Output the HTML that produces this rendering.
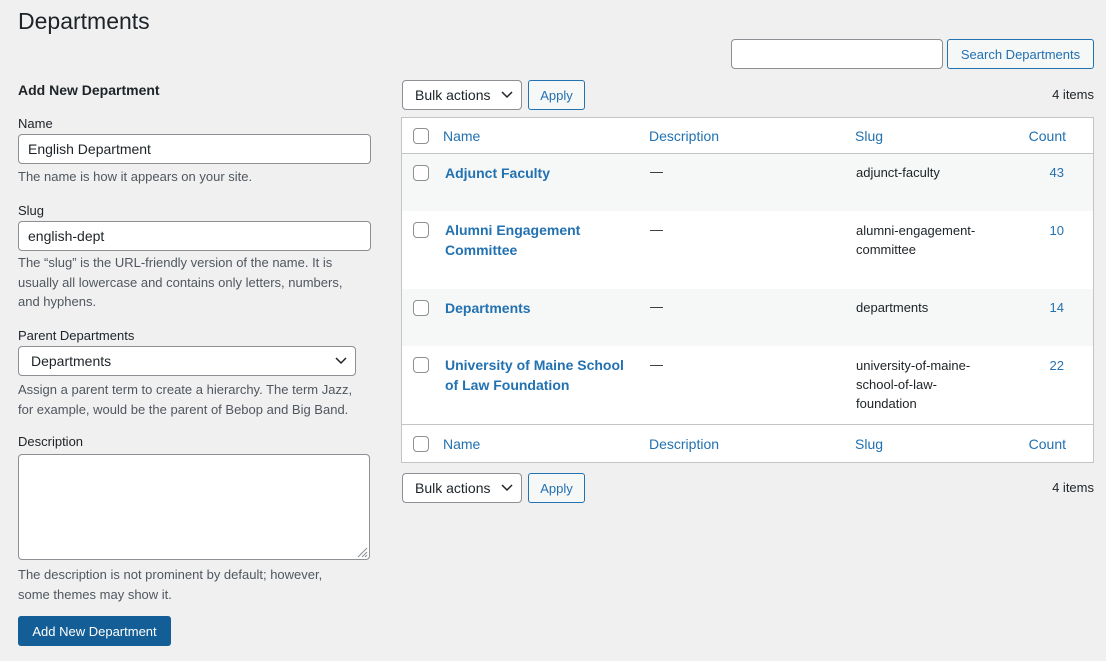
<!DOCTYPE html>
<html><head><style>
*{box-sizing:border-box;margin:0;padding:0}
body{width:1106px;height:661px;background:#f0f0f1;font-family:"Liberation Sans",sans-serif;font-size:13px;color:#1d2327;position:relative;overflow:hidden}
.a{position:absolute}
h1{position:absolute;left:18px;top:8px;font-size:23px;font-weight:400}
.inp{position:absolute;background:#fff;border:1px solid #8c8f94;border-radius:4px;font-size:14px;padding:0 9px;display:flex;align-items:center}
.btn{position:absolute;border:1px solid #2271b1;color:#2271b1;background:#f6f7f7;border-radius:3px;font-size:13px;display:flex;align-items:center;justify-content:center}
.sel{position:absolute;background:#fff;border:1px solid #8c8f94;border-radius:4px;font-size:14px;padding-left:12px;display:flex;align-items:center}
.sel svg{position:absolute;right:8px;top:50%;margin-top:-4px}
.help{position:absolute;left:18px;color:#50575e;font-size:13px;line-height:19.5px}
.lbl{position:absolute;left:18px;font-size:13px}
.cb{position:absolute;width:16px;height:16px;border:1px solid #8c8f94;border-radius:4px;background:#fff;left:413px}
.nm{position:absolute;left:445px;font-weight:700;color:#2271b1;font-size:14px;line-height:20px}
.ds{position:absolute;left:650px}
.sl{position:absolute;left:856px;line-height:19px}
.ct{position:absolute;right:42px;color:#2271b1}
.hd{position:absolute;color:#2271b1;font-size:14px}
</style></head><body>
<h1>Departments</h1>
<div class="inp" style="left:731px;top:39px;width:212px;height:30px"></div>
<div class="btn" style="left:947px;top:39px;width:147px;height:30px">Search Departments</div>

<div class="a" style="left:18px;top:82px;font-size:14px;font-weight:700">Add New Department</div>
<div class="lbl" style="top:116px">Name</div>
<div class="inp" style="left:18px;top:134px;width:353px;height:30px">English Department</div>
<div class="help" style="top:167px">The name is how it appears on your site.</div>
<div class="lbl" style="top:203px">Slug</div>
<div class="inp" style="left:18px;top:221px;width:353px;height:30px">english-dept</div>
<div class="help" style="top:253px;width:345px">The “slug” is the URL-friendly version of the name. It is usually all lowercase and contains only letters, numbers, and hyphens.</div>
<div class="lbl" style="top:328px">Parent Departments</div>
<div class="sel" style="left:18px;top:346px;width:338px;height:30px">Departments<svg width="12" height="8"><path d="M1 1l5 5 5-5" stroke="#1d2327" stroke-width="1.5" fill="none"/></svg></div>
<div class="help" style="top:380px;width:345px">Assign a parent term to create a hierarchy. The term Jazz, for example, would be the parent of Bebop and Big Band.</div>
<div class="lbl" style="top:434px">Description</div>
<div class="inp" style="left:18px;top:454px;width:352px;height:106px"></div>
<svg class="a" style="left:356px;top:546px" width="12" height="12"><path d="M2 11L11 2M6 11l5-5M9 11l2-2" stroke="#8c8f94" stroke-width="1"/></svg>
<div class="help" style="top:565px;width:330px">The description is not prominent by default; however, some themes may show it.</div>
<div class="a" style="left:18px;top:616px;width:153px;height:30px;background:#135e96;color:#fff;border-radius:3px;display:flex;align-items:center;justify-content:center;font-size:13px">Add New Department</div>

<div class="sel" style="left:402px;top:80px;width:120px;height:30px">Bulk actions<svg width="12" height="8"><path d="M1 1l5 5 5-5" stroke="#1d2327" stroke-width="1.5" fill="none"/></svg></div>
<div class="btn" style="left:528px;top:80px;width:57px;height:30px">Apply</div>
<div class="a" style="right:12px;top:87px">4 items</div>

<div class="a" style="left:401px;top:117px;width:693px;height:346px;background:#fff;border:1px solid #c3c4c7"></div>
<div class="a" style="left:402px;top:153px;width:691px;height:1px;background:#c3c4c7"></div>
<div class="a" style="left:402px;top:154px;width:691px;height:57px;background:#f6f7f7"></div>
<div class="a" style="left:402px;top:289px;width:691px;height:57px;background:#f6f7f7"></div>
<div class="a" style="left:402px;top:424px;width:691px;height:1px;background:#c3c4c7"></div>

<div class="cb" style="top:128px"></div>
<div class="hd" style="left:443px;top:128px">Name</div>
<div class="hd" style="left:649px;top:128px">Description</div>
<div class="hd" style="left:855px;top:128px">Slug</div>
<div class="hd" style="right:40px;top:128px">Count</div>

<div class="cb" style="top:165px"></div>
<div class="nm" style="top:163px">Adjunct Faculty</div>
<div class="ds" style="top:164px">—</div>
<div class="sl" style="top:163px">adjunct-faculty</div>
<div class="ct" style="top:165px">43</div>

<div class="cb" style="top:222px"></div>
<div class="nm" style="top:220px">Alumni Engagement<br>Committee</div>
<div class="ds" style="top:222px">—</div>
<div class="sl" style="top:221px">alumni-engagement-<br>committee</div>
<div class="ct" style="top:223px">10</div>

<div class="cb" style="top:300px"></div>
<div class="nm" style="top:298px">Departments</div>
<div class="ds" style="top:299px">—</div>
<div class="sl" style="top:298px">departments</div>
<div class="ct" style="top:300px">14</div>

<div class="cb" style="top:357px"></div>
<div class="nm" style="top:355px">University of Maine School<br>of Law Foundation</div>
<div class="ds" style="top:357px">—</div>
<div class="sl" style="top:356px">university-of-maine-<br>school-of-law-<br>foundation</div>
<div class="ct" style="top:358px">22</div>

<div class="cb" style="top:436px"></div>
<div class="hd" style="left:443px;top:436px">Name</div>
<div class="hd" style="left:649px;top:436px">Description</div>
<div class="hd" style="left:855px;top:436px">Slug</div>
<div class="hd" style="right:40px;top:436px">Count</div>

<div class="sel" style="left:402px;top:473px;width:120px;height:30px">Bulk actions<svg width="12" height="8"><path d="M1 1l5 5 5-5" stroke="#1d2327" stroke-width="1.5" fill="none"/></svg></div>
<div class="btn" style="left:528px;top:473px;width:57px;height:30px">Apply</div>
<div class="a" style="right:12px;top:480px">4 items</div>
</body></html>
